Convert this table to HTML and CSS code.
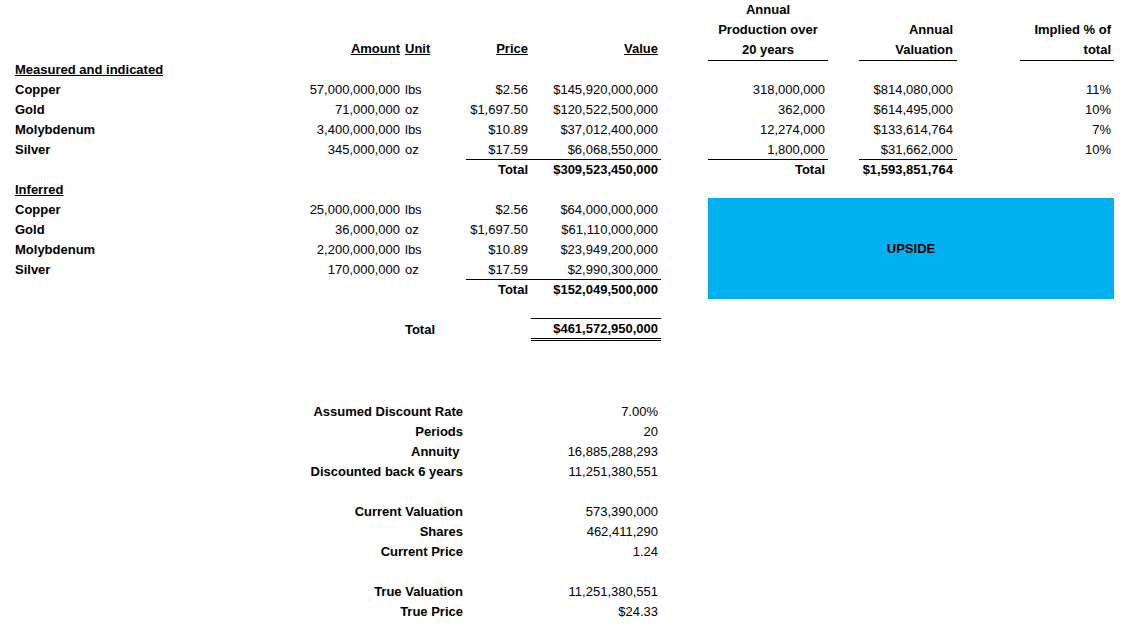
FILE: index.html
```html
<!DOCTYPE html>
<html>
<head>
<meta charset="utf-8">
<link rel="stylesheet" href="styles.css">
</head>
<body>
<div class="sheet">
  <div class="left">
    <div class="row head">
      <div class="c"></div>
      <div class="c r b"><u>Amount</u></div>
      <div class="c u b"><u>Unit</u></div>
      <div class="c"></div>
      <div class="c r b"><u>Price</u></div>
      <div class="c r b"><u>Value</u></div>
    </div>
    <div class="row"><div class="c lab b"><u>Measured and indicated</u></div></div>
    <div class="row"><div class="c lab b">Copper</div><div class="c r">57,000,000,000</div><div class="c u">lbs</div><div class="c"></div><div class="c r">$2.56</div><div class="c r">$145,920,000,000</div></div>
    <div class="row"><div class="c lab b">Gold</div><div class="c r">71,000,000</div><div class="c u">oz</div><div class="c"></div><div class="c r">$1,697.50</div><div class="c r">$120,522,500,000</div></div>
    <div class="row"><div class="c lab b">Molybdenum</div><div class="c r">3,400,000,000</div><div class="c u">lbs</div><div class="c"></div><div class="c r">$10.89</div><div class="c r">$37,012,400,000</div></div>
    <div class="row"><div class="c lab b">Silver</div><div class="c r">345,000,000</div><div class="c u">oz</div><div class="c"></div><div class="c r line">$17.59</div><div class="c r line">$6,068,550,000</div></div>
    <div class="row"><div class="c"></div><div class="c"></div><div class="c"></div><div class="c"></div><div class="c r b">Total</div><div class="c r b">$309,523,450,000</div></div>
    <div class="row"><div class="c lab b"><u>Inferred</u></div></div>
    <div class="row"><div class="c lab b">Copper</div><div class="c r">25,000,000,000</div><div class="c u">lbs</div><div class="c"></div><div class="c r">$2.56</div><div class="c r">$64,000,000,000</div></div>
    <div class="row"><div class="c lab b">Gold</div><div class="c r">36,000,000</div><div class="c u">oz</div><div class="c"></div><div class="c r">$1,697.50</div><div class="c r">$61,110,000,000</div></div>
    <div class="row"><div class="c lab b">Molybdenum</div><div class="c r">2,200,000,000</div><div class="c u">lbs</div><div class="c"></div><div class="c r">$10.89</div><div class="c r">$23,949,200,000</div></div>
    <div class="row"><div class="c lab b">Silver</div><div class="c r">170,000,000</div><div class="c u">oz</div><div class="c"></div><div class="c r line">$17.59</div><div class="c r line">$2,990,300,000</div></div>
    <div class="row"><div class="c"></div><div class="c"></div><div class="c"></div><div class="c"></div><div class="c r b">Total</div><div class="c r b">$152,049,500,000</div></div>
    <div class="row"><div class="c span5"></div><div class="c line"></div></div>
    <div class="row grand"><div class="c r b span3">Total</div><div class="c"></div><div class="c"></div><div class="c r b dbl">$461,572,950,000</div></div>

    <div class="lower">
      <div class="row"><div class="c r b span4">Assumed Discount Rate</div><div class="c"></div><div class="c r">7.00%</div></div>
      <div class="row"><div class="c r b span4">Periods</div><div class="c"></div><div class="c r">20</div></div>
      <div class="row"><div class="c r b span4">Annuity&nbsp;</div><div class="c"></div><div class="c r">16,885,288,293</div></div>
      <div class="row"><div class="c r b span4">Discounted back 6 years</div><div class="c"></div><div class="c r">11,251,380,551</div></div>
      <div class="row"></div>
      <div class="row"><div class="c r b span4">Current Valuation</div><div class="c"></div><div class="c r">573,390,000</div></div>
      <div class="row"><div class="c r b span4">Shares</div><div class="c"></div><div class="c r">462,411,290</div></div>
      <div class="row"><div class="c r b span4">Current Price</div><div class="c"></div><div class="c r">1.24</div></div>
      <div class="row"></div>
      <div class="row"><div class="c r b span4">True Valuation</div><div class="c"></div><div class="c r">11,251,380,551</div></div>
      <div class="row"><div class="c r b span4">True Price</div><div class="c"></div><div class="c r">$24.33</div></div>
    </div>
  </div>

  <div class="right">
    <div class="rrow rhead">
      <div class="c ctr b hb">Annual<br>Production over<br>20 years</div>
      <div class="c"></div>
      <div class="c r b hb vr">Annual<br>Valuation</div>
      <div class="c"></div>
      <div class="c r b hb">Implied % of<br>total</div>
    </div>
    <div class="rrow"></div>
    <div class="rrow"><div class="c r">318,000,000</div><div class="c"></div><div class="c r vr">$814,080,000</div><div class="c"></div><div class="c r">11%</div></div>
    <div class="rrow"><div class="c r">362,000</div><div class="c"></div><div class="c r vr">$614,495,000</div><div class="c"></div><div class="c r">10%</div></div>
    <div class="rrow"><div class="c r">12,274,000</div><div class="c"></div><div class="c r vr">$133,614,764</div><div class="c"></div><div class="c r">7%</div></div>
    <div class="rrow"><div class="c r line">1,800,000</div><div class="c"></div><div class="c r vr line">$31,662,000</div><div class="c"></div><div class="c r">10%</div></div>
    <div class="rrow"><div class="c r b">Total</div><div class="c"></div><div class="c r b vr">$1,593,851,764</div><div class="c"></div><div class="c"></div></div>
    <div class="rrow"></div>
    <div class="upside">UPSIDE</div>
  </div>
</div>
</body>
</html>
```

FILE: styles.css
```css
* { box-sizing: border-box; }

body {
  margin: 0;
  background: #ffffff;
  color: #000000;
  font-family: "Liberation Sans", Arial, sans-serif;
  font-size: 13px;
}

.sheet {
  display: flex;
  align-items: flex-start;
  width: 1114px;
}

.left {
  width: 661px;
}

.row {
  display: grid;
  grid-template-columns: 300px 103px 35px 28px 65px 130px;
  height: 20px;
  line-height: 20px;
}

.c {
  padding: 1px 3px 0 3px;
  white-space: nowrap;
  min-width: 0;
}

.b { font-weight: bold; }
.r { text-align: right; }
.ctr { text-align: center; }
.lab { padding-left: 15px; grid-column: 1 / 2; }
.u { padding-left: 2px; }

.span3 { grid-column: 1 / 4; }
.span4 { grid-column: 1 / 5; }
.span5 { grid-column: 1 / 6; }

.line {
  border-bottom: 1px solid #000;
  line-height: 19px;
}

.head {
  height: 59px;
  align-items: end;
}

.head .c {
  padding-top: 0;
  padding-bottom: 0;
}

.grand {
  height: 22px;
}

.dbl {
  border-bottom: 3px double #000;
  line-height: 19px;
  padding-top: 0;
}

.lower {
  margin-top: 60px;
}

.right {
  width: 406px;
  margin-left: 47px;
}

.rrow {
  display: grid;
  grid-template-columns: 120px 31px 98px 63px 94px;
  height: 20px;
  line-height: 20px;
}

.rhead {
  height: 59px;
  align-items: end;
}

.rhead .c {
  padding-top: 0;
}

.hb {
  border-bottom: 1px solid #000;
  line-height: 20px;
}

.vr {
  padding-right: 4px;
}

.upside {
  margin-top: -1px;
  height: 101px;
  background: #00b0f0;
  display: flex;
  align-items: center;
  justify-content: center;
  font-weight: bold;
}
```
